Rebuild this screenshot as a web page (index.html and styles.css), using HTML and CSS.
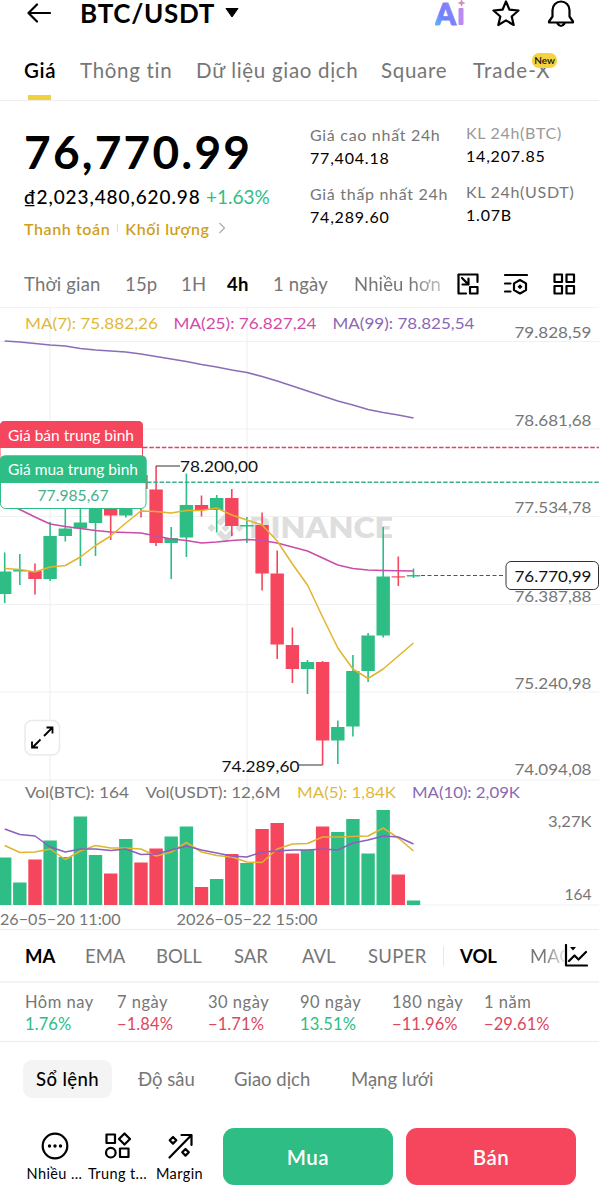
FILE: index.html
```html
<!DOCTYPE html>
<html lang="vi">
<head>
    <meta charset="UTF-8">
    <title>BTC/USDT</title>
    <link rel="stylesheet" href="styles.css">
</head>
<body>
    <header class="topbar">
        <svg class="back" width="24" height="20" viewBox="0 0 24 20"><path d="M23 10H2M10 1.5L1.5 10l8.500 8.500"/></svg>
        <h1 class="pair">BTC/USDT</h1>
        <svg class="caret" width="14" height="10" viewBox="0 0 14 10"><path d="M1 .5h12L7 9z" stroke="#000" stroke-linejoin="round"/></svg>
        <div class="top-icons">
            <svg width="30" height="28" viewBox="0 0 30 28">
                <defs>
                    <linearGradient id="ai" x1="0" y1="1" x2="1" y2="0">
                        <stop offset="0" stop-color="#5cc8fa"/>
                        <stop offset=".4" stop-color="#6f7ffb"/>
                        <stop offset="1" stop-color="#a58af5"/>
                    </linearGradient>
                </defs>
                <text class="ai-text" x="0" y="26" fill="url(#ai)" stroke="url(#ai)" textLength="21" lengthAdjust="spacingAndGlyphs">A</text>
                <rect x="23.500" y="9" width="5" height="17" rx="1" fill="#b98af0"/>
                <path d="M26.500 0l1.200 2.800L30.500 4l-2.800 1.200L26.500 8l-1.200-2.800L22.500 4l2.800-1.200z" fill="#d58fc0"/>
            </svg>
            <svg width="28" height="28" viewBox="0 0 28 28" class="line star"><path d="M14 2.500l3.500 8.200 9 .8-6.800 6 2 8.500L14 21.400l-7.700 4.600 2-8.500-6.800-6 9-.8z"/></svg>
            <svg width="28" height="30" viewBox="0 0 28 30" class="line bell"><path d="M5.500 12a8.500 8.500 0 0 1 17 0v6.500l3.500 5v1H2v-1l3.500-5z"/><path d="M10.500 25.500q3.500 5 7 0"/></svg>
        </div>
    </header>

    <nav class="tabs">
        <a class="tab t1 active">Giá</a>
        <a class="tab t2">Thông tin</a>
        <a class="tab t3">Dữ liệu giao dịch</a>
        <a class="tab t4">Square</a>
        <a class="tab t5">Trade-X<span class="badge">New</span></a>
    </nav>

    <section class="summary">
        <div class="price-box">
            <div class="price">76,770.99</div>
            <div class="fiat"><span class="vnd">₫2,023,480,620.98</span><span class="change">+1.63%</span></div>
            <div class="tags">
                <span>Thanh toán</span><i></i><span>Khối lượng</span>
                <svg width="8" height="12" viewBox="0 0 8 12"><path d="M1.500 1L6.500 6l-5 5"/></svg>
            </div>
        </div>
        <dl class="stats">
            <dt>Giá cao nhất 24h</dt><dd>77,404.18</dd>
            <dt>Giá thấp nhất 24h</dt><dd>74,289.60</dd>
        </dl>
        <dl class="stats vol">
            <dt class="light">KL 24h(BTC)</dt><dd>14,207.85</dd>
            <dt>KL 24h(USDT)</dt><dd>1.07B</dd>
        </dl>
    </section>

    <nav class="intervals">
        <span class="iv1">Thời gian</span>
        <span class="iv2">15p</span>
        <span class="iv3">1H</span>
        <span class="iv4 on">4h</span>
        <span class="iv5">1 ngày</span>
        <span class="iv6 fade">Nhiều hơn</span>
        <div class="tools">
            <svg width="24" height="24" viewBox="0 0 24 24" class="line"><path d="M10 21.500H2.500v-19h19V10M6 6l6.500 6.500M12.500 6.500v6h-6"/><rect x="14" y="15" width="7.500" height="6.500"/></svg>
            <svg width="24" height="24" viewBox="0 0 24 24" class="line"><path d="M1 3h22M1 11.500h5.500M1 19.500h5.500M16 8l6 3.400v6.700l-6 3.400-6-3.400v-6.700z"/><path d="M16 12.200l2.500 2.500-2.500 2.500-2.500-2.500z" fill="#000" stroke="none"/></svg>
            <svg width="24" height="24" viewBox="0 0 24 24" class="line"><rect x="2.500" y="2.500" width="7.500" height="7.500"/><rect x="14.500" y="2.500" width="7.500" height="7.500"/><rect x="2.500" y="14" width="7.500" height="7.500"/><rect x="14.500" y="14" width="7.500" height="7.500"/></svg>
        </div>
    </nav>

    <!-- y trong biểu đồ tính theo toạ độ trang -->
    <svg class="chart" width="599" height="621" viewBox="0 308 599 621">
        <g class="grid">
            <path d="M0 341.500H599M0 429H599M0 516.500H599M0 604.500H599M0 692H599M0 780H599M0 905H599M50 308V905M247 308V905"/>
        </g>
        <g class="watermark">
            <path d="M225.500 513l9 9-4 4-5-5-5 5-4-4zM207.500 528l4-4 4 4-4 4zM221.500 528l4-4 4 4-4 4zM235.500 528l4-4 4 4-4 4zM216.500 534l4-4 5 5 5-5 4 4-9 9z"/>
            <text x="249" y="538" textLength="144" lengthAdjust="spacingAndGlyphs">BINANCE</text>
        </g>
        <g id="candles"></g>
        <g id="volumes"></g>
        <g id="lines"></g>

        <path class="avg sell" d="M143 447.500H599"/>
        <path class="avg buy" d="M147 482.300H599"/>
        <path class="last" d="M421 575.500H505"/>
        <path class="mark" d="M156 466H180M299 765H322.500"/>
        <text class="hl" x="180" y="471.500" textLength="78" lengthAdjust="spacingAndGlyphs">78.200,00</text>
        <text class="hl" x="221.500" y="771.500" textLength="78" lengthAdjust="spacingAndGlyphs">74.289,60</text>

        <g>
            <rect x="0" y="421.500" width="142.500" height="50" rx="5" fill="#fff" stroke="#f6465d"/>
            <path d="M0 426q0-5 5-5h133q5 0 5 5v22H0z" fill="#f6465d"/>
            <text class="tag" x="8" y="440.500" textLength="126" lengthAdjust="spacingAndGlyphs">Giá bán trung bình</text>
            <rect x=".5" y="456" width="145.500" height="52.500" rx="5" fill="#fff" stroke="#2ebd85"/>
            <path d="M0 460.500q0-5 5-5h136.500q5 0 5 5V483H0z" fill="#2ebd85"/>
            <text class="tag" x="8" y="474.500" textLength="130" lengthAdjust="spacingAndGlyphs">Giá mua trung bình</text>
            <text class="tag-value" x="37.500" y="501" textLength="71" lengthAdjust="spacingAndGlyphs">77.985,67</text>
        </g>

        <g class="legend">
            <text x="25" y="328.500" textLength="133" lengthAdjust="spacingAndGlyphs" fill="#dfb83a">MA(7): 75.882,26</text>
            <text x="173.500" y="328.500" textLength="143" lengthAdjust="spacingAndGlyphs" fill="#d24ba6">MA(25): 76.827,24</text>
            <text x="332.500" y="328.500" textLength="142" lengthAdjust="spacingAndGlyphs" fill="#8a68b5">MA(99): 78.825,54</text>
            <text x="25" y="797.500" textLength="104" lengthAdjust="spacingAndGlyphs">Vol(BTC): 164</text>
            <text x="145.500" y="797.500" textLength="135" lengthAdjust="spacingAndGlyphs">Vol(USDT): 12,6M</text>
            <text x="297" y="797.500" textLength="99" lengthAdjust="spacingAndGlyphs" fill="#dfb83a">MA(5): 1,84K</text>
            <text x="412" y="797.500" textLength="108" lengthAdjust="spacingAndGlyphs" fill="#8a68b5">MA(10): 2,09K</text>
        </g>
        <g class="axis">
            <text x="514.500" y="338" textLength="77" lengthAdjust="spacingAndGlyphs">79.828,59</text>
            <text x="514.500" y="425.500" textLength="77" lengthAdjust="spacingAndGlyphs">78.681,68</text>
            <text x="514.500" y="513" textLength="77" lengthAdjust="spacingAndGlyphs">77.534,78</text>
            <text x="514.500" y="601.500" textLength="77" lengthAdjust="spacingAndGlyphs">76.387,88</text>
            <text x="514.500" y="689" textLength="77" lengthAdjust="spacingAndGlyphs">75.240,98</text>
            <text x="514.500" y="775" textLength="77" lengthAdjust="spacingAndGlyphs">74.094,08</text>
            <text x="548" y="827" textLength="43.500" lengthAdjust="spacingAndGlyphs">3,27K</text>
            <text x="564.500" y="900" textLength="27" lengthAdjust="spacingAndGlyphs">164</text>
            <text x="0" y="925" textLength="120.500" lengthAdjust="spacingAndGlyphs">26−05−20 11:00</text>
            <text x="176.500" y="925" textLength="141" lengthAdjust="spacingAndGlyphs">2026−05−22 15:00</text>
        </g>
        <rect x="506" y="561.500" width="92.500" height="28" rx="5" fill="#fff" stroke="#333"/>
        <text class="hl" x="514.500" y="581.500" textLength="77" lengthAdjust="spacingAndGlyphs">76.770,99</text>

        <rect x="25" y="720.500" width="34.500" height="34.500" rx="7" fill="#fff" stroke="#eaeaea" stroke-width="1.500"/>
        <path class="expand" d="M44 736l8.500-8.500M46.500 727.500h6v6M40.500 739.500L32 748M38 747.500h-6v-6"/>
    </svg>

    <nav class="indicators">
        <span class="in1 on">MA</span>
        <span class="in2">EMA</span>
        <span class="in3">BOLL</span>
        <span class="in4">SAR</span>
        <span class="in5">AVL</span>
        <span class="in6">SUPER</span>
        <span class="in7 on">VOL</span>
        <span class="in8">MAC</span>
        <svg width="24" height="24" viewBox="0 0 24 24" class="line"><path d="M2 1v20.500h21M5 17l5.500-5.500 4 4L22 8"/><path d="M6 3h6L9 6.500z" fill="#000" stroke="none"/></svg>
    </nav>

    <section class="periods">
        <div class="p1"><span>Hôm nay</span><b class="up">1.76%</b></div>
        <div class="p2"><span>7 ngày</span><b class="down">−1.84%</b></div>
        <div class="p3"><span>30 ngày</span><b class="down">−1.71%</b></div>
        <div class="p4"><span>90 ngày</span><b class="up">13.51%</b></div>
        <div class="p5"><span>180 ngày</span><b class="down">−11.96%</b></div>
        <div class="p6"><span>1 năm</span><b class="down">−29.61%</b></div>
    </section>

    <nav class="books">
        <span class="bk1 on">Sổ lệnh</span>
        <span class="bk2">Độ sâu</span>
        <span class="bk3">Giao dịch</span>
        <span class="bk4">Mạng lưới</span>
    </nav>

    <footer class="actions">
        <div class="act a1">
            <svg width="28" height="28" viewBox="0 0 28 28" class="line"><circle cx="14" cy="14" r="12.300"/><g fill="#000" stroke="none"><circle cx="8.500" cy="14" r="1.700"/><circle cx="14" cy="14" r="1.700"/><circle cx="19.500" cy="14" r="1.700"/></g></svg>
            <span>Nhiều ...</span>
        </div>
        <div class="act a2">
            <svg width="28" height="28" viewBox="0 0 28 28" class="line"><rect x="2.500" y="2.500" width="8.500" height="8.500"/><path d="M20.500 1.500l5.500 5.500-5.500 5.500L15 7z"/><circle cx="6.800" cy="20.700" r="4.800"/><rect x="16" y="16.500" width="8.500" height="8.500"/></svg>
            <span>Trung t...</span>
        </div>
        <div class="act a3">
            <svg width="28" height="28" viewBox="0 0 28 28" class="line"><path d="M3.500 25.500L25 3.500M15.500 3h10v10M7 5l3.300 3.300L7 11.600 3.700 8.300zM19.500 17l3.300 3.300-3.300 3.300-3.300-3.300z"/></svg>
            <span>Margin</span>
        </div>
        <button class="buy-btn">Mua</button>
        <button class="sell-btn">Bán</button>
    </footer>

<script src="chart.js"></script>
</body>
</html>
```
FILE: styles.css
```css
:root {
    --up: #2ebd85;
    --down: #f6465d;
    --gray: #767676;
    --line: #ececec;
}

* {
    box-sizing: border-box;
}

body {
    margin: 0;
    width: 599px;
    height: 1200px;
    overflow: hidden;
    background: #fff;
    color: #000;
    font-family: Lato, "Noto Sans", sans-serif;
    white-space: nowrap;
}

svg {
    display: block;
    flex: none;
}

.line,
.back {
    fill: none;
    stroke: #000;
    stroke-width: 2.2;
    stroke-linejoin: round;
    stroke-linecap: round;
}

/* header */
.topbar {
    display: flex;
    align-items: center;
    height: 26px;
    padding-left: 27px;
}

.pair {
    width: 140px;
    margin: 0 0 0 29px;
    font-size: 26px;
    line-height: 26px;
    font-weight: 700;
    letter-spacing: .7px;
}

.caret {
    margin-left: 5px;
}

.top-icons {
    display: flex;
    align-items: center;
    margin-left: 196px;
    gap: 27px;
}

.ai-text {
    font-size: 30px;
    font-weight: 900;
    stroke-width: 1px;
}

.tabs {
    display: flex;
    height: 75px;
    padding-left: 24px;
    border-bottom: 1px solid var(--line);
}

.tab {
    position: relative;
    flex: none;
    height: 74px;
    line-height: 89px;
    font-size: 20.5px;
    letter-spacing: .7px;
    color: var(--gray);
}

.t1 { width: 56px; }
.t2 { width: 116px; }
.t3 { width: 185px; }
.t4 { width: 92px; }
.t5 { letter-spacing: 1.1px; }

.tab.active {
    color: #000;
    font-weight: 600;
}

.tab.active::after {
    content: "";
    position: absolute;
    left: 4px;
    bottom: 0;
    width: 23px;
    height: 5px;
    background: #f3d13d;
}

.badge {
    position: absolute;
    left: 59px;
    top: 27px;
    width: 25px;
    height: 15px;
    border-radius: 7px;
    background: #f5d23f;
    color: #111;
    font-size: 10px;
    line-height: 15px;
    font-weight: 600;
    letter-spacing: 0;
    text-align: center;
}

/* price */
.summary {
    display: flex;
    height: 159px;
    padding-left: 24px;
}

.price-box {
    flex: none;
    width: 286px;
    padding-top: 26px;
}

.price {
    font-size: 46px;
    line-height: 50px;
    font-weight: 700;
    letter-spacing: 2.2px;
}

.fiat {
    display: flex;
    height: 40px;
    line-height: 40px;
    font-size: 19px;
}

.vnd {
    width: 182px;
    font-weight: 500;
    letter-spacing: .9px;
}

.change {
    color: var(--up);
}

.tags {
    display: flex;
    align-items: center;
    height: 22px;
    color: #cf9f1b;
    font-size: 16px;
    font-weight: 600;
    letter-spacing: .6px;
}

.tags i {
    width: 1px;
    height: 8px;
    margin: 0 7px;
    background: #ddd;
}

.tags svg {
    margin-left: 8px;
    fill: none;
    stroke: #aaa;
    stroke-width: 1.2;
}

.stats {
    flex: none;
    width: 156px;
    margin: 0;
    padding-top: 22px;
    font-size: 16px;
    letter-spacing: .7px;
}

.stats dt {
    height: 24px;
    line-height: 24px;
    color: var(--gray);
}

.stats dd {
    height: 35px;
    margin: 0;
    line-height: 22px;
    letter-spacing: .8px;
}

.stats.vol {
    width: auto;
    padding-top: 20px;
}

.stats dt.light {
    color: #999;
}

/* intervals */
.intervals {
    display: flex;
    align-items: center;
    height: 48px;
    padding-left: 24px;
    border-bottom: 1px solid #f2f2f2;
    font-size: 18.5px;
    letter-spacing: .15px;
    color: var(--gray);
}

.intervals span {
    flex: none;
}

.iv1 { width: 101px; }
.iv2 { width: 56px; }
.iv3 { width: 46px; }
.iv4 { width: 46px; }
.iv5 { width: 81px; }
.iv6 { width: 102px; }

.on {
    color: #000;
    font-weight: 700;
}

.fade {
    -webkit-mask-image: linear-gradient(to right, #000 55%, rgba(0,0,0,.35) 90%);
    mask-image: linear-gradient(to right, #000 55%, rgba(0,0,0,.35) 90%);
}

.tools {
    display: flex;
    gap: 24px;
}

/* chart */
.chart .grid path {
    stroke: #f1f1f1;
    stroke-width: 1.2;
}

.chart .watermark {
    fill: #dedede;
    font-size: 28px;
    font-weight: 800;
}

.chart polyline {
    fill: none;
    stroke-width: 1.5;
    stroke-linejoin: round;
}

.avg,
.last {
    stroke-width: 1.5;
    stroke-dasharray: 4.5 1.8;
}

.avg.sell { stroke: #e0455c; }
.avg.buy { stroke: #3fae8c; }

.last {
    stroke: #555;
    stroke-width: 1.2;
    stroke-dasharray: 4 2.5;
}

.mark {
    fill: none;
    stroke: #333;
}

.hl {
    font-size: 15.5px;
    fill: #111;
}

.tag {
    font-size: 14.5px;
    fill: #fff;
}

.tag-value {
    font-size: 15px;
    fill: #45b08a;
}

.legend,
.axis {
    font-size: 15.5px;
    fill: var(--gray);
}

.expand {
    fill: none;
    stroke: #000;
    stroke-width: 1.8;
}

/* indicators */
.indicators {
    display: flex;
    align-items: center;
    height: 54px;
    padding-left: 25px;
    border-top: 1px solid var(--line);
    border-bottom: 2px solid #f3f3f3;
    font-size: 18.5px;
    color: var(--gray);
}

.indicators span {
    flex: none;
}

.in1 { width: 60px; }
.in2 { width: 71px; }
.in3 { width: 78px; }
.in4 { width: 68px; }
.in5 { width: 66px; }
.in6 {
    width: 75px;
    letter-spacing: .3px;
}

.in7 {
    width: 87px;
    padding-left: 17px;
    background: linear-gradient(#e8e8e8, #e8e8e8) no-repeat 0 50% / 1px 20px;
}

.in8 {
    width: 34px;
    overflow: hidden;
    -webkit-mask-image: linear-gradient(to right, #000 40%, rgba(0,0,0,.2));
    mask-image: linear-gradient(to right, #000 40%, rgba(0,0,0,.2));
}

/* periods */
.periods {
    display: flex;
    height: 59px;
    padding: 8px 0 0 25px;
    border-bottom: 1px solid var(--line);
    font-size: 16.5px;
    color: var(--gray);
}

.periods span,
.periods b {
    display: block;
    height: 22px;
    line-height: 22px;
    font-weight: 400;
}

.periods span {
    letter-spacing: .5px;
}

.periods b {
    letter-spacing: .1px;
}

.p1 { width: 92px; }
.p2 { width: 91px; }
.p3 { width: 92px; }
.p4 { width: 92px; }
.p5 { width: 92px; }

.up { color: var(--up); }
.down { color: #dd4860; }

.books {
    display: flex;
    align-items: center;
    height: 73px;
    padding-left: 23px;
    font-size: 18.5px;
    color: var(--gray);
}

.bk1 {
    width: 89px;
    height: 38px;
    margin-right: 26px;
    border-radius: 9px;
    background: #f4f4f4;
    line-height: 38px;
    text-align: center;
    letter-spacing: .4px;
}

.books .on { font-weight: 500; }
.bk2 { width: 96px; }
.bk3 { width: 117px; }

/* bottom bar */
.actions {
    display: flex;
    padding: 13px 0 0 23px;
}

.act {
    display: flex;
    flex-direction: column;
    align-items: center;
    padding-top: 4px;
    font-size: 14.5px;
    line-height: 27px;
    letter-spacing: .4px;
}

.a1 { width: 63px; }
.a2 { width: 63px; }
.a3 { width: 61px; }

.actions button {
    width: 170px;
    height: 57px;
    border: none;
    border-radius: 11px;
    color: #fff;
    font-family: inherit;
    font-size: 20.5px;
    font-weight: 600;
    letter-spacing: .5px;
}

.buy-btn {
    margin: 0 13px;
    background: var(--up);
}

.sell-btn {
    background: var(--down);
}
```
FILE: chart.js
```js
const UP = '#2ebd85';
const DOWN = '#f6465d';
const STEP = 15.14;
const FIRST = 4.7;

// [màu, cao, thân trên, thân dưới, thấp, đỉnh khối lượng]
const bars = [
    ['u', 552.5, 571.5, 594, 603, 857.5],
    ['u', 554, 570, 571.5, 585, 882.5],
    ['d', 563.5, 571, 579, 594.5, 859.5],
    ['u', 522, 536, 579, 581, 840.5],
    ['u', 500, 528.5, 536, 541.5, 857],
    ['u', 490, 522.5, 528.5, 566, 816.5],
    ['u', 490, 500, 523, 556, 855],
    ['d', 490, 500, 515.5, 540, 873.5],
    ['u', 500, 501, 515.5, 517.5, 839],
    ['d', 475, 475, 489, 517.5, 862.5],
    ['d', 466, 489.5, 543, 546, 848.5],
    ['u', 527, 538, 543, 579, 836.5],
    ['u', 473.5, 505, 537.5, 557, 826.5],
    ['d', 495.5, 505, 510, 516.5, 887],
    ['u', 495, 498, 510, 532.5, 879],
    ['d', 489, 498, 526, 536, 854],
    ['u', 517, 525, 526.5, 543, 863],
    ['d', 512.5, 525, 573.5, 590.5, 829],
    ['d', 550.5, 573.5, 644.5, 659, 823],
    ['d', 627.5, 645, 669, 683, 853.5],
    ['u', 660, 662, 669, 694, 850],
    ['d', 661, 662, 740.5, 765, 826.5],
    ['u', 720.5, 727, 740.5, 764, 832],
    ['u', 655, 671, 726.5, 736.5, 819],
    ['u', 633, 635.5, 671, 682, 853.5],
    ['u', 527, 576.5, 635.5, 637.5, 810],
    ['d', 556.5, 576.3, 577.5, 586, 874.5],
    ['u', 568.5, 575, 576.5, 578, 900.5]
];

const series = [
    { color: '#8a6db8', y: [341, 342, 343.5, 345, 346, 348.5, 350, 351, 352, 354, 356.5, 359, 361.5, 364.5, 367, 370, 372.5, 376.5, 381, 386, 391, 396, 401, 405, 409.5, 412.5, 415, 418] },
    { color: '#cb4ba8', y: [502, 509.5, 517, 524, 526.5, 528.5, 530.5, 532, 532.5, 533, 536, 539, 540.5, 543, 542, 540.5, 539.5, 540.5, 543, 547, 551, 558, 565, 568.5, 570, 570.5, 570.7, 571] },
    { color: '#e0b52d', y: [568.5, 569.5, 572, 567, 565.5, 557, 545.5, 536, 523, 511, 511.5, 513, 510.5, 510.5, 508, 515, 520, 525, 541, 564, 585, 617, 648, 669, 678.5, 669, 656, 643] },
    { color: '#e0b52d', y: [845.5, 852.5, 852, 849, 859.5, 851, 845.5, 848, 848, 849, 856, 852, 842.5, 852, 855.5, 857, 862, 862.5, 849, 844, 843.5, 837, 837, 836.5, 836, 828, 838, 851] },
    { color: '#8a5fbf', y: [829, 834.5, 836, 847, 852, 849, 849, 850.5, 849, 854.5, 854, 850, 846, 850, 853, 856, 857, 852, 851, 850, 850, 849, 850, 843, 840, 836, 837, 844] }
];

function xAt(i) {
    return FIRST + i * STEP;
}

function rect(x, y, w, h, color) {
    return `<rect x="${x.toFixed(1)}" y="${y}" width="${w}" height="${h}" fill="${color}"/>`;
}

let candles = '';
let volumes = '';
bars.forEach(([dir, high, top, bottom, low, vol], i) => {
    const x = xAt(i);
    const color = dir === 'u' ? UP : DOWN;
    candles += rect(x - 0.8, high, 1.6, low - high, color);
    candles += rect(x - 6.7, top, 13.4, bottom - top, color);
    volumes += rect(x - 6.7, vol, 13.4, 905 - vol, color);
});
document.getElementById('candles').innerHTML = candles;
document.getElementById('volumes').innerHTML = volumes;

document.getElementById('lines').innerHTML = series.map(s => {
    const points = s.y.map((y, i) => `${xAt(i).toFixed(1)},${y}`).join(' ');
    return `<polyline points="${points}" stroke="${s.color}"/>`;
}).join('');
```
